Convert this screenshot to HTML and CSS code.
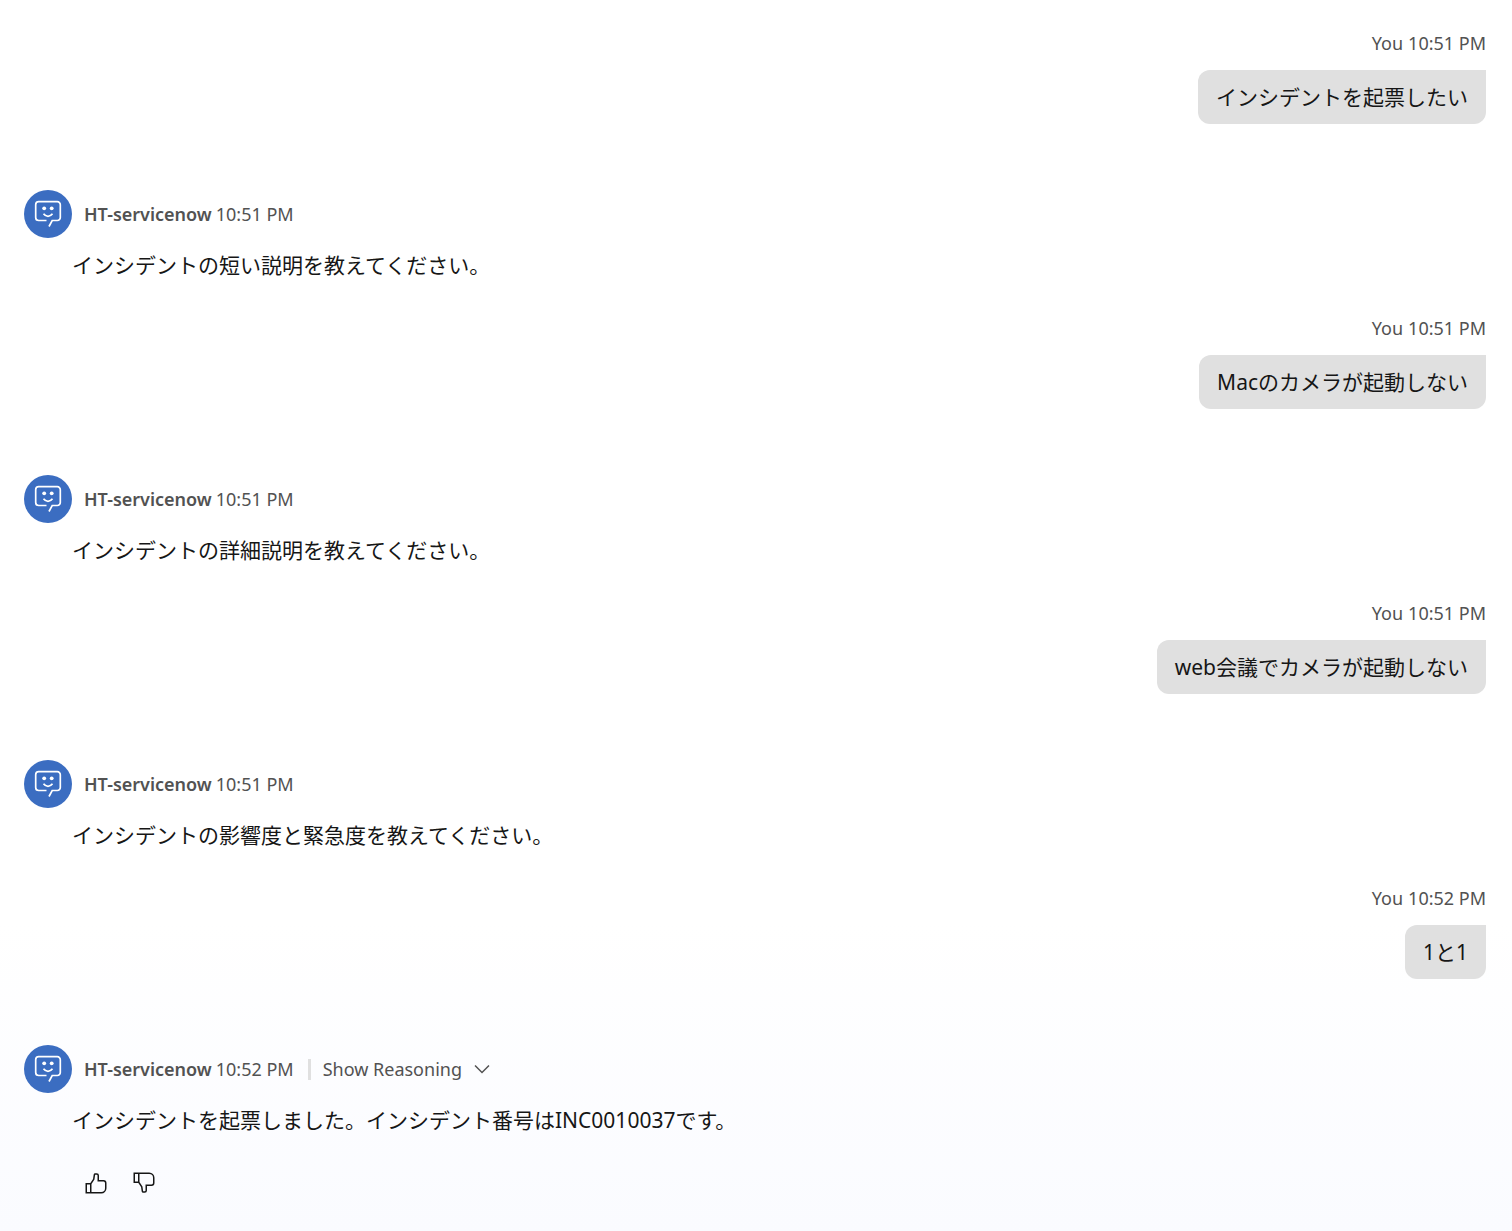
FILE: index.html
```html
<!DOCTYPE html>
<html lang="ja">
<head>
<meta charset="utf-8">
<meta name="viewport" content="width=device-width, initial-scale=1">
<title>HT-servicenow</title>
<link rel="stylesheet" href="styles.css">
</head>
<body>
<svg class="sprite" aria-hidden="true">
  <symbol id="bot" viewBox="0 0 48 48">
    <path d="M22.500 30.500H14.700a3 3 0 0 1-3-3V14.700a3 3 0 0 1 3-3H33.300a3 3 0 0 1 3 3V27.500a3 3 0 0 1-3 3H28.200L25 36.500M19.500 23.800q1.800 2.500 4.500 2.500t4.500-2.500" fill="none" stroke="#fff" stroke-width="1.700"/>
    <circle cx="20.200" cy="18.300" r="1.900" fill="#fff"/>
    <circle cx="27.700" cy="18.300" r="1.900" fill="#fff"/>
  </symbol>
  <symbol id="thumb" viewBox="0 0 32 32">
    <path fill="currentColor" d="M26,12H20V6a3.0033,3.0033,0,0,0-3-3H14.8672a2.0094,2.0094,0,0,0-1.98,1.7173l-.8453,5.9165L8.4648,16H2V30H23a7.0078,7.0078,0,0,0,7-7V16A4.0045,4.0045,0,0,0,26,12ZM8,28H4V18H8Zm20-5a5.0057,5.0057,0,0,1-5,5H10V17.3027l3.9578-5.9365L14.8672,5H17a1.0008,1.0008,0,0,1,1,1v8h8a2.0025,2.0025,0,0,1,2,2Z"/>
  </symbol>
</svg>
<main class="chat">
  <article class="message user">
    <header class="meta"><span>You</span> <time>10:51 PM</time></header>
    <p class="bubble">インシデントを起票したい</p>
  </article>
  <article class="message bot">
    <header class="meta"><svg class="avatar" aria-hidden="true"><use href="#bot"/></svg><strong>HT-servicenow</strong><time>10:51 PM</time></header>
    <p class="answer">インシデントの短い説明を教えてください。</p>
  </article>
  <article class="message user">
    <header class="meta"><span>You</span> <time>10:51 PM</time></header>
    <p class="bubble">Macのカメラが起動しない</p>
  </article>
  <article class="message bot">
    <header class="meta"><svg class="avatar" aria-hidden="true"><use href="#bot"/></svg><strong>HT-servicenow</strong><time>10:51 PM</time></header>
    <p class="answer">インシデントの詳細説明を教えてください。</p>
  </article>
  <article class="message user">
    <header class="meta"><span>You</span> <time>10:51 PM</time></header>
    <p class="bubble">web会議でカメラが起動しない</p>
  </article>
  <article class="message bot">
    <header class="meta"><svg class="avatar" aria-hidden="true"><use href="#bot"/></svg><strong>HT-servicenow</strong><time>10:51 PM</time></header>
    <p class="answer">インシデントの影響度と緊急度を教えてください。</p>
  </article>
  <article class="message user">
    <header class="meta"><span>You</span> <time>10:52 PM</time></header>
    <p class="bubble">1と1</p>
  </article>
  <article class="message bot">
    <header class="meta"><svg class="avatar" aria-hidden="true"><use href="#bot"/></svg><strong>HT-servicenow</strong><time>10:52 PM</time>
      <button class="reasoning" type="button" aria-expanded="false">Show Reasoning
        <svg class="icon" viewBox="0 0 16 16" aria-hidden="true"><path fill="currentColor" d="M8 11 3 6l.7-.7L8 9.600l4.300-4.300.7.7z"/></svg>
      </button>
    </header>
    <p class="answer">インシデントを起票しました。インシデント番号はINC0010037です。</p>
    <div class="feedback">
      <button type="button" aria-label="Good response"><svg class="icon"><use href="#thumb"/></svg></button>
      <button type="button" aria-label="Bad response"><svg class="icon flipped"><use href="#thumb"/></svg></button>
    </div>
  </article>
</main>
</body>
</html>
```
FILE: styles.css
```css
* {
  box-sizing: border-box;
}

body {
  margin: 0;
  min-height: 100vh;
  color: #161616;
  background: linear-gradient(#fff 75%, #fafbff);
  font: 21px/30px "Noto Sans", "Noto Sans CJK JP", sans-serif;
}

.sprite {
  display: block;
  width: 0;
  height: 0;
}

.chat {
  padding: 31px 26px 24px 24px;
}

.message {
  display: flex;
  flex-direction: column;
}

.meta {
  display: flex;
  align-items: center;
  color: #525252;
  font-size: 18px;
  line-height: 24px;
}

.user {
  align-items: flex-end;
  gap: 15px;
  margin-bottom: 66px;
}

.user .meta {
  gap: 5px;
}

.bubble {
  margin: 0;
  padding: 12px 18px;
  border-radius: 12px 0 12px 12px;
  background: #e0e0e0;
}

.bot {
  gap: 12px;
  margin-bottom: 36px;
}

.bot:last-child {
  margin-bottom: 0;
}

.bot .meta {
  gap: 4px;
}

.bot strong {
  font-weight: 600;
}

.avatar {
  width: 48px;
  height: 48px;
  margin-right: 8px;
  border-radius: 50%;
  background: #3b6dc1;
}

.answer {
  margin: 0;
  padding-left: 48px;
}

button {
  padding: 0;
  border: 0;
  background: none;
  color: inherit;
  font: inherit;
  cursor: pointer;
}

.icon {
  display: block;
  width: 24px;
  height: 24px;
}

.reasoning {
  display: flex;
  align-items: center;
  gap: 8px;
  height: 21px;
  margin-left: 10px;
  padding-left: 12px;
  border-left: 3px solid #e0e0e0;
  line-height: 21px;
}

.feedback {
  display: flex;
  gap: 24px;
  padding: 24px 0 0 60px;
}

.flipped {
  transform: scaleY(-1);
}
```
